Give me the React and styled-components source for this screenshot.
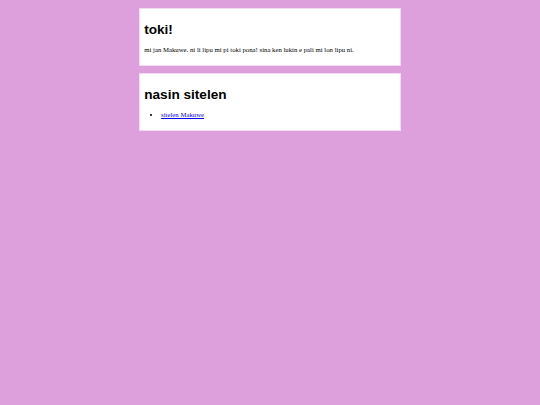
import React from "react";
import styled, { createGlobalStyle } from "styled-components";

const GlobalStyle = createGlobalStyle`
  html, body {
    background: #dda0dd;
  }
  body {
    margin: 0;
    padding: 8px 3.4px;
    font-family: "Liberation Serif", "Times New Roman", serif;
    font-size: 6.75px;
    color: #000;
  }
`;

const Card = styled.section`
  max-width: 251.6px;
  margin: 0 auto 7.6px;
  padding: 3.8px 4.2px 5px;
  background: #ffffff;
  border: 1px solid #f3dbf3;
`;

const Heading = styled.h1`
  font-family: "Liberation Sans", Arial, sans-serif;
  font-weight: bold;
  font-size: 13.6px;
  margin: 9.05px 0;
  line-height: normal;
`;

const Paragraph = styled.p`
  margin: 6.75px 0;
  line-height: normal;
`;

const List = styled.ul`
  margin: 6.75px 0;
  padding-left: 16.9px;
  list-style: disc;
`;

const Item = styled.li`
  line-height: normal;
`;

const Link = styled.a`
  color: #0000ee;
  text-decoration: underline;
`;

export default function App() {
  return (
    <>
      <GlobalStyle />
      <Card>
        <Heading>toki!</Heading>
        <Paragraph>
          mi jan Makuwe. ni li lipu mi pi toki pona! sina ken lukin e pali mi lon lipu ni.
        </Paragraph>
      </Card>
      <Card>
        <Heading>nasin sitelen</Heading>
        <List>
          <Item>
            <Link href="#">sitelen Makuwe</Link>
          </Item>
        </List>
      </Card>
    </>
  );
}
